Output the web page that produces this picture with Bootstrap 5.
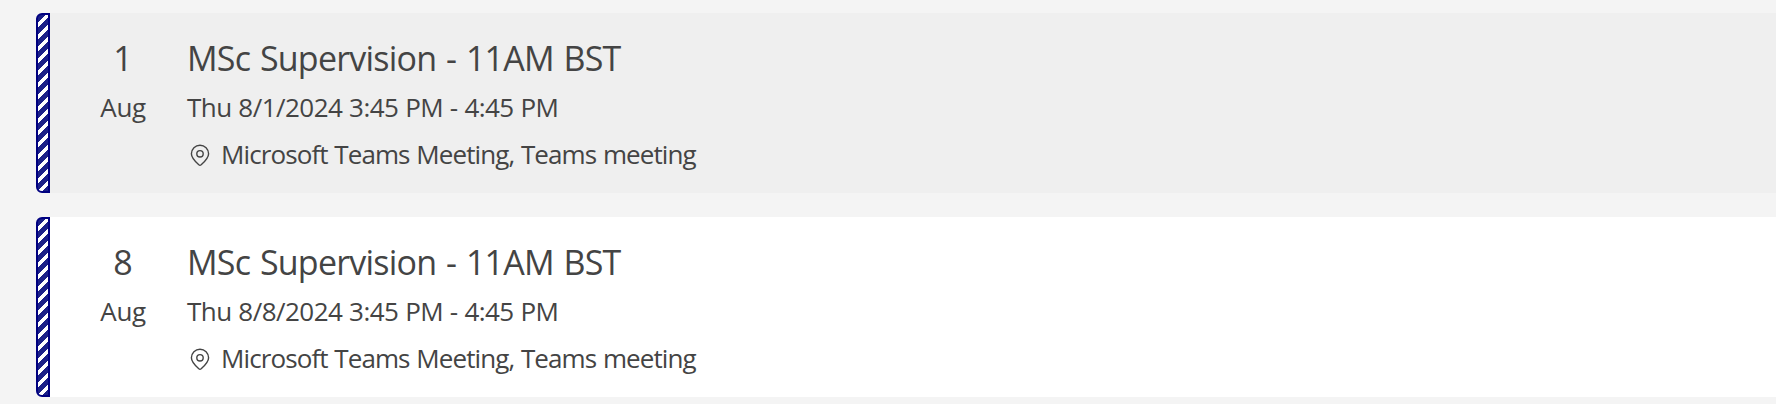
<!DOCTYPE html>
<html lang="en">
<head>
<meta charset="utf-8">
<meta name="viewport" content="width=device-width, initial-scale=1">
<title>Calendar search results</title>
<link href="https://cdn.jsdelivr.net/npm/bootstrap@5.3.0/dist/css/bootstrap.min.css" rel="stylesheet">
<style>
body{background:#f4f4f4;color:#444;font-family:"Open Sans","Noto Sans",sans-serif;font-size:26px;line-height:47px;overflow:hidden}
.agenda{padding:13px 0 0 36px;gap:24px}
.event{height:180px;background:#fff;border-radius:8px 0 0 8px}
.event.past{background:#efefef}
.stripe{width:14px;border:2px solid #000080;border-radius:6px 0 0 6px;background:repeating-linear-gradient(135deg,#fff 0 .4px,#1b2088 .4px 5.2px,#fff 5.2px 8.485px)}
.day{width:98px;margin-left:24px;padding-top:22px}
.info{padding:22px 0 0 15px}
.big{font-size:34px;margin-bottom:2px}
.title{letter-spacing:-.78px;word-spacing:1.7px}
.time{letter-spacing:-.53px;word-spacing:.5px}
.place{letter-spacing:-.9px;word-spacing:.8px}
.month{letter-spacing:-.4px}
.pin{width:20px;height:22px;margin:1px 11px 0 3px}
</style>
</head>
<body>
<main class="agenda d-flex flex-column">
  <article class="event past d-flex">
    <div class="stripe flex-shrink-0"></div>
    <div class="day text-center flex-shrink-0"><div class="big">1</div><div class="month">Aug</div></div>
    <div class="info text-nowrap">
      <div class="big"><span class="title">MSc Supervision - 11AM BST</span></div>
      <div><span class="time">Thu 8/1/2024 3:45 PM - 4:45 PM</span></div>
      <div class="d-flex align-items-center"><svg class="pin flex-shrink-0" viewBox="0 0 20 22" fill="none" stroke="#444" stroke-width="1.4"><path d="M10 1.2a8.6 8.6 0 0 0-8.6 8.6c0 4.2 3.3 7.4 7.4 11q1.2 .9 2.4 0c4.1-3.6 7.4-6.8 7.4-11A8.6 8.6 0 0 0 10 1.2z"/><circle cx="10" cy="9.8" r="3.2"/></svg><span class="place">Microsoft Teams Meeting, Teams meeting</span></div>
    </div>
  </article>
  <article class="event d-flex">
    <div class="stripe flex-shrink-0"></div>
    <div class="day text-center flex-shrink-0"><div class="big">8</div><div class="month">Aug</div></div>
    <div class="info text-nowrap">
      <div class="big"><span class="title">MSc Supervision - 11AM BST</span></div>
      <div><span class="time">Thu 8/8/2024 3:45 PM - 4:45 PM</span></div>
      <div class="d-flex align-items-center"><svg class="pin flex-shrink-0" viewBox="0 0 20 22" fill="none" stroke="#444" stroke-width="1.4"><path d="M10 1.2a8.6 8.6 0 0 0-8.6 8.6c0 4.2 3.3 7.4 7.4 11q1.2 .9 2.4 0c4.1-3.6 7.4-6.8 7.4-11A8.6 8.6 0 0 0 10 1.2z"/><circle cx="10" cy="9.8" r="3.2"/></svg><span class="place">Microsoft Teams Meeting, Teams meeting</span></div>
    </div>
  </article>
</main>
<script src="https://cdn.jsdelivr.net/npm/bootstrap@5.3.0/dist/js/bootstrap.bundle.min.js"></script>
</body>
</html>
